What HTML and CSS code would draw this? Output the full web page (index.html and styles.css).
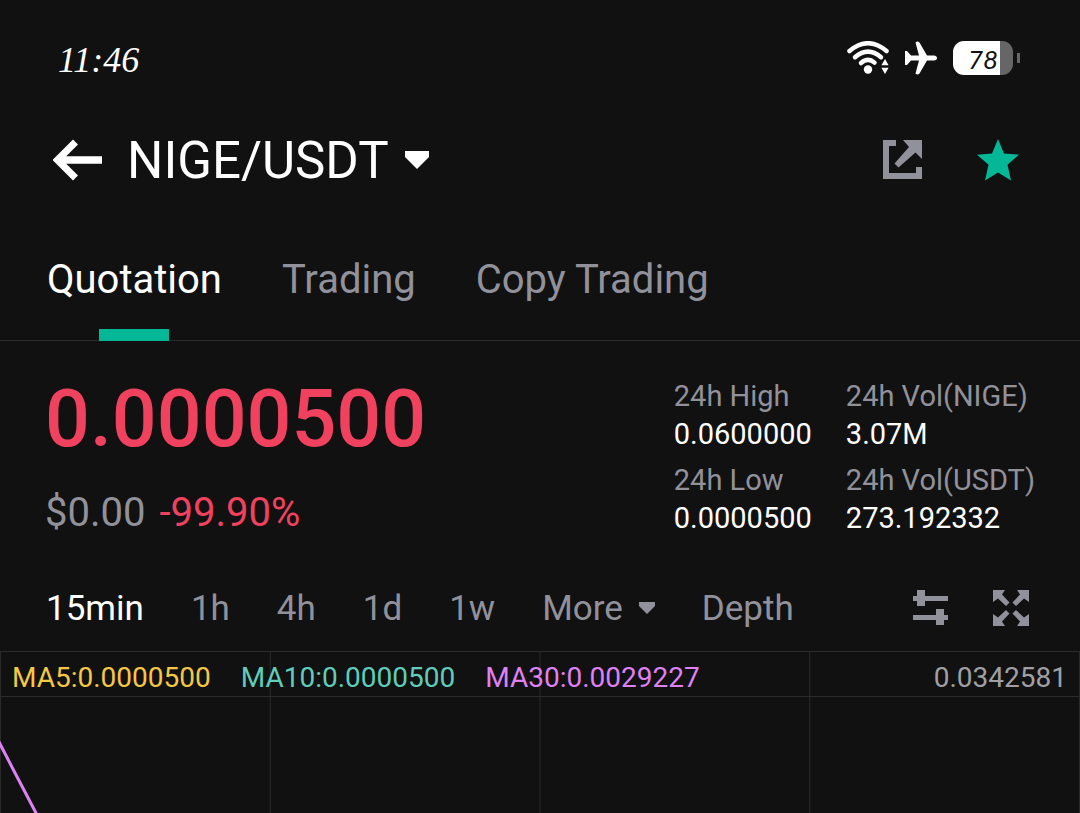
FILE: index.html
```html
<!DOCTYPE html>
<html lang="en">
<head>
    <meta charset="UTF-8">
    <meta name="viewport" content="width=device-width, initial-scale=1.0">
    <title>NIGE/USDT</title>
    <link rel="stylesheet" href="styles.css">
</head>
<body>
    <div class="status-bar">
        <time class="clock">11:46</time>
        <div class="status-icons">
            <svg class="wifi" width="42" height="34" viewBox="0 0 42 34" fill="none" stroke="#fff" stroke-width="4.500" stroke-linecap="round">
                <path d="M2.500 10Q21-5.500 39.500 10"/>
                <path d="M8 16.200Q21 5 34 16.200"/>
                <path d="M14 22Q21 16 27.500 21.600"/>
                <circle cx="21" cy="28.500" r="4.200" fill="#fff" stroke="none"/>
                <path d="M38 18l3.600 6.200h-7.200zM38 33l-3.600-6.200h7.200z" fill="#fff" stroke="none"/>
            </svg>
            <svg class="plane" width="32" height="34" viewBox="0 0 32 34" fill="#fff">
                <path d="M0 10h2l4 4.500h8L10.500 1.500q2-2 4 0L22 14.500h7q3 .5 3 2.500t-3 2.500h-7L14.500 32.500q-2 2-4 0L14 19.500H6L2 24H0z"/>
            </svg>
            <div class="battery"><span class="battery-level">78</span></div>
        </div>
    </div>

    <header class="header">
        <button class="icon-btn" aria-label="Back">
            <svg width="50" height="42" viewBox="0 0 50 42" fill="none" stroke="#fff">
                <path d="M4 21h45" stroke-width="7.500"/>
                <path d="M22.500 3L4.500 21l18 18" stroke-width="7"/>
            </svg>
        </button>
        <button class="pair">
            NIGE/USDT
            <svg width="24" height="18" viewBox="0 0 24 18" fill="#fff"><path d="M0 0h24v6L12 18 0 6z"/></svg>
        </button>
        <div class="header-actions">
            <button class="icon-btn" aria-label="Share">
                <svg width="40" height="40" viewBox="0 0 40 40" fill="#91919b">
                    <path d="M0 0h13v6H6v27h27v-6h6v12H0z"/>
                    <path d="M20 0h19v19l-6.500-6.500L15.500 27.500l-4-4L26 7z"/>
                </svg>
            </button>
            <button class="icon-btn" aria-label="Favourite">
                <svg width="42" height="42" viewBox="0 0 42 42" fill="#04b797">
                    <path d="M21 0l6 14.500 15 1.200-11.500 10L34 41.500l-13-8-13 8 3.500-15.800L0 15.700l15-1.200z"/>
                </svg>
            </button>
        </div>
    </header>

    <nav class="tabs">
        <a href="#" class="tab active">Quotation</a>
        <a href="#" class="tab">Trading</a>
        <a href="#" class="tab">Copy Trading</a>
    </nav>

    <section class="summary">
        <div>
            <div class="price">0.0000500</div>
            <div class="change">$0.00 <span class="down">-99.90%</span></div>
        </div>
        <dl class="stats">
            <div>
                <dt>24h High</dt>
                <dd>0.0600000</dd>
            </div>
            <div>
                <dt>24h Vol(NIGE)</dt>
                <dd>3.07M</dd>
            </div>
            <div>
                <dt>24h Low</dt>
                <dd>0.0000500</dd>
            </div>
            <div>
                <dt>24h Vol(USDT)</dt>
                <dd>273.192332</dd>
            </div>
        </dl>
    </section>

    <div class="intervals">
        <button class="interval active">15min</button>
        <button class="interval">1h</button>
        <button class="interval">4h</button>
        <button class="interval">1d</button>
        <button class="interval">1w</button>
        <button class="interval">
            More
            <svg width="16" height="12" viewBox="0 0 16 12" fill="currentColor"><path d="M0 0h16v4L8 12 0 4z"/></svg>
        </button>
        <button class="interval">Depth</button>
        <div class="chart-tools">
            <button class="icon-btn" aria-label="Indicators">
                <svg width="36" height="36" viewBox="0 0 36 36" fill="#91919b">
                    <path d="M0 6h4V0h8v6h23v5H12v5H4v-5H0z"/>
                    <path d="M0 25h23v-6h8v6h4v5h-4v5h-8v-5H0z"/>
                </svg>
            </button>
            <button class="icon-btn" aria-label="Full screen">
                <svg width="36" height="36" viewBox="0 0 36 36" fill="#91919b">
                    <path id="corner" d="M0 0h12L9 4.500l7.500 8-3.500 3.500-8-7.500L0 12z"/>
                    <use href="#corner" transform="matrix(-1 0 0 1 36 0)"/>
                    <use href="#corner" transform="matrix(1 0 0 -1 0 36)"/>
                    <use href="#corner" transform="matrix(-1 0 0 -1 36 36)"/>
                </svg>
            </button>
        </div>
    </div>

    <section class="chart">
        <div class="legend">
            <span class="ma5">MA5:0.0000500</span>
            <span class="ma10">MA10:0.0000500</span>
            <span class="ma30">MA30:0.0029227</span>
            <span class="axis-max">0.0342581</span>
        </div>
        <svg class="plot" aria-hidden="true">
            <path d="M-2 43L14 74L36 116L60 164" fill="none" stroke="#df80f5" stroke-width="3"/>
        </svg>
    </section>
</body>
</html>
```

FILE: styles.css
```css
* {
    box-sizing: border-box;
}
body {
    margin: 0;
    min-height: 100vh;
    display: flex;
    flex-direction: column;
    background: #111;
    color: #fff;
    font-family: Roboto, sans-serif;
}
button {
    padding: 0;
    border: none;
    background: none;
    color: inherit;
    font: inherit;
    cursor: pointer;
}
svg {
    display: block;
}
.icon-btn {
    display: flex;
}

/* Status bar */
.status-bar {
    display: flex;
    align-items: center;
    justify-content: space-between;
    height: 116px;
    padding: 0 67px 0 58px;
}
.clock {
    padding-top: 4px;
    font-family: "Liberation Serif", serif;
    font-style: italic;
    font-size: 36px;
}
.status-icons {
    display: flex;
    align-items: center;
    gap: 16px;
}
.battery {
    position: relative;
    width: 60px;
    height: 34px;
    border-radius: 11px;
    background: linear-gradient(to right, #fff 78%, #666 78%);
}
.battery::after {
    content: "";
    position: absolute;
    top: 12px;
    right: -7px;
    width: 3px;
    height: 10px;
    background: #666;
}
.battery-level {
    display: block;
    color: #111;
    font-family: Lato, sans-serif;
    font-style: italic;
    font-size: 26px;
    line-height: 36px;
    text-align: center;
}

/* Header */
.header {
    display: flex;
    align-items: center;
    height: 88px;
    padding: 0 61px 0 53px;
}
.pair {
    display: flex;
    align-items: center;
    gap: 16px;
    margin-left: 24px;
    font-size: 51px;
}
.header-actions {
    display: flex;
    align-items: center;
    gap: 54px;
    margin-left: auto;
}

/* Tabs */
.tabs {
    display: flex;
    gap: 60px;
    padding: 0 47px;
    border-bottom: 1px solid #2a2a2a;
}
.tab {
    position: relative;
    padding: 52px 0 36px;
    color: #91919b;
    font-size: 40px;
    line-height: 48px;
    text-decoration: none;
}
.tab.active {
    color: #fff;
}
.tab.active::after {
    content: "";
    position: absolute;
    bottom: -1px;
    left: 50%;
    width: 70px;
    height: 12px;
    margin-left: -35px;
    background: #04b797;
}

/* Price and 24h figures */
.summary {
    display: flex;
    justify-content: space-between;
    padding: 36px 45px 28px;
}
.price {
    color: #f0425f;
    font-size: 79px;
    font-weight: 500;
    line-height: 84px;
}
.change {
    margin-top: 28px;
    color: #91919b;
    font-size: 40px;
    line-height: 48px;
}
.down {
    margin-left: 4px;
    color: #f0425f;
}
.stats {
    display: grid;
    grid-template-columns: auto auto;
    gap: 8px 34px;
    margin: 0;
    font-size: 29px;
    line-height: 38px;
}
.stats dt {
    color: #91919b;
}
.stats dd {
    margin: 0;
}

/* Chart intervals */
.intervals {
    display: flex;
    align-items: center;
    gap: 47px;
    height: 86px;
    padding: 0 51px 0 46px;
}
.interval {
    display: flex;
    align-items: center;
    gap: 16px;
    color: #91919b;
    font-size: 35px;
}
.interval.active {
    color: #fff;
}
.chart-tools {
    display: flex;
    gap: 44px;
    margin-left: auto;
}

/* Chart, vertical grid lines at every quarter */
.chart {
    display: flex;
    flex: 1;
    flex-direction: column;
    border-top: 1px solid #2a2a2a;
    border-right: 1px solid #2a2a2a;
    background: linear-gradient(to right, #2a2a2a 1px, transparent 1px) 0 0 / 25% 100%;
}
.legend {
    display: flex;
    align-items: center;
    gap: 30px;
    height: 45px;
    padding: 6px 12px 0;
    border-bottom: 1px solid #2a2a2a;
    font-size: 28px;
}
.ma5 {
    color: #f5c844;
}
.ma10 {
    color: #5fcdb9;
}
.ma30 {
    color: #df80f5;
}
.axis-max {
    margin-left: auto;
    color: #a0a0a4;
}
.plot {
    flex: 1;
    width: 100%;
    min-height: 100px;
    overflow: hidden;
}
```
